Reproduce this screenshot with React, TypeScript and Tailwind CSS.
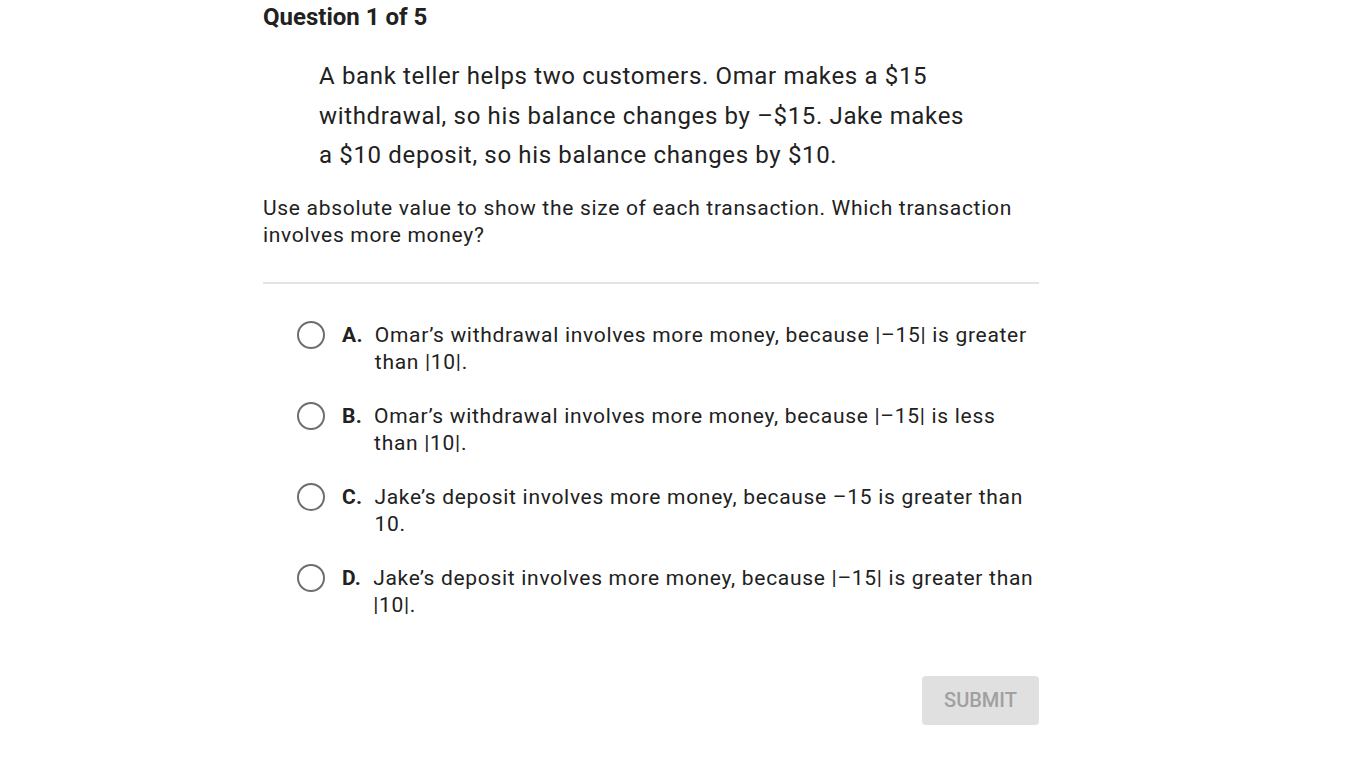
import React from "react";

const options = [
  { l: "A.", t: "Omar\u2019s withdrawal involves more money, because |\u201315| is greater than |10|." },
  { l: "B.", t: "Omar\u2019s withdrawal involves more money, because |\u201315| is less than |10|." },
  { l: "C.", t: "Jake\u2019s deposit involves more money, because \u201315 is greater than 10." },
  { l: "D.", t: "Jake\u2019s deposit involves more money, because |\u201315| is greater than |10|." },
];

export default function App() {
  return (
    <div className="min-h-[768px] bg-white text-[#212121]" style={{ fontFamily: "Roboto, 'Noto Sans', sans-serif" }}>
      <div className="ml-[263px] w-[776px]">
        <h1 className="text-[24px] font-bold leading-[34px] tracking-[0px]">Question 1 of 5</h1>
        <div className="ml-[56px] mt-[23px] w-[655px] text-[24px] leading-[39.5px] tracking-[0.65px]">
          A bank teller helps two customers. Omar makes a $15 withdrawal, so his balance changes by &ndash;$15. Jake makes a $10 deposit, so his balance changes by $10.
        </div>
        <div className="mt-[19px] text-[21px] leading-[27px] tracking-[0.7px]">
          Use absolute value to show the size of each transaction. Which transaction involves more money?
        </div>
        <div className="mt-[33px] h-[2px] bg-[#e4e4e4]" />
        <div className="mt-[38px] flex flex-col gap-[27px] pl-[34px]">
          {options.map((o) => (
            <div key={o.l} className="flex items-start text-[21px] leading-[27px] tracking-[0.7px]">
              <div className="mt-[-1px] h-[28px] w-[28px] shrink-0 rounded-full border-2 border-[#6e6e6e]" />
              <span className="ml-[17px] shrink-0 font-bold tracking-[0.3px]">{o.l}</span>
              <span className="ml-[12px]">{o.t}</span>
            </div>
          ))}
        </div>
        <div className="mt-[57px] flex justify-end">
          <button className="h-[49px] w-[117px] rounded-[4px] bg-[#e0e0e0] text-[20px] font-medium text-[#a0a0a0]">
            SUBMIT
          </button>
        </div>
      </div>
    </div>
  );
}
